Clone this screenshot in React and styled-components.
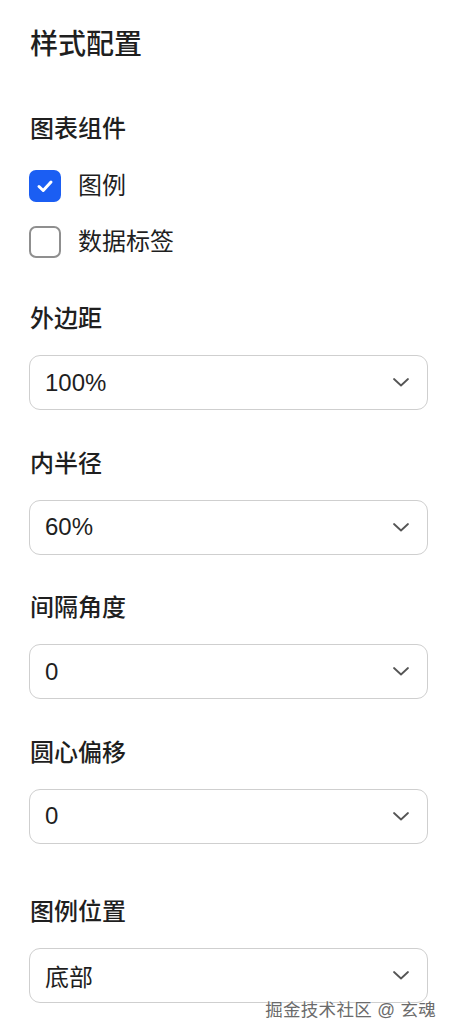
import React from 'react'
import styled, { createGlobalStyle } from 'styled-components'

const GlobalStyle = createGlobalStyle`
  html, body {
    margin: 0;
    padding: 0;
    background: #ffffff;
  }
  body {
    font-family: "Liberation Sans", "Noto Sans CJK SC", sans-serif;
    color: #1f1f1f;
  }
`

const Page = styled.div`
  position: relative;
  width: 452px;
  height: 1036px;
  box-sizing: border-box;
  padding: 25px 24px 0 29px;
  display: flex;
  flex-direction: column;
  overflow: hidden;
`

const Title = styled.h2`
  margin: 0;
  font-size: 28px;
  line-height: 40px;
  font-weight: 500;
  padding-left: 1px;
`

const GroupLabel = styled.div`
  font-size: 24px;
  line-height: 36px;
  font-weight: 500;
  padding-left: 1px;
  margin-top: ${(p) => p.marginTop || '0'};
`

const CheckList = styled.div`
  display: flex;
  flex-direction: column;
  gap: 24px;
  margin-top: 23px;
`

const CheckRow = styled.label`
  display: flex;
  align-items: center;
  gap: 17px;
  font-size: 24px;
  line-height: 32px;
`

const Box = styled.span`
  width: 32px;
  height: 32px;
  box-sizing: border-box;
  border-radius: 7px;
  display: flex;
  align-items: center;
  justify-content: center;
  flex-shrink: 0;
  background: ${(p) => (p.checked ? '#1b5ef3' : '#ffffff')};
  border: ${(p) => (p.checked ? 'none' : '2px solid #8f8f8f')};
`

const Field = styled.div`
  display: flex;
  flex-direction: column;
  margin-top: ${(p) => p.marginTop || '35.5px'};
`

const SelectBox = styled.div`
  margin-top: 18px;
  height: 55px;
  box-sizing: border-box;
  border: 1.5px solid #cfcfcf;
  border-radius: 11px;
  display: flex;
  align-items: center;
  justify-content: space-between;
  padding: 0 17px 0 15px;
  font-size: 24px;
  color: #1f1f1f;
`

const Watermark = styled.div`
  position: absolute;
  right: 16px;
  bottom: 16px;
  font-size: 17.5px;
  line-height: 20px;
  color: #6b6b6b;
  text-shadow: 0 0 2px #fff, 0 0 1px #fff;
  letter-spacing: 0.3px;
`

const Check = () => (
  <svg width="20" height="20" viewBox="0 0 20 20" fill="none">
    <path d="M4 10.5 L8.2 14.5 L16 6" stroke="#fff" strokeWidth="3" strokeLinecap="round" strokeLinejoin="round" />
  </svg>
)

const Chevron = () => (
  <svg width="18" height="11" viewBox="0 0 18 11" fill="none">
    <path d="M2 2 L9 8.5 L16 2" stroke="#555" strokeWidth="1.8" strokeLinecap="round" strokeLinejoin="round" />
  </svg>
)

const Checkbox = ({ checked, label }) => (
  <CheckRow>
    <Box checked={checked}>{checked && <Check />}</Box>
    <span>{label}</span>
  </CheckRow>
)

const Select = ({ label, value, marginTop }) => (
  <Field marginTop={marginTop}>
    <GroupLabel>{label}</GroupLabel>
    <SelectBox>
      <span>{value}</span>
      <Chevron />
    </SelectBox>
  </Field>
)

const fields = [
  { label: '外边距', value: '100%', marginTop: '43px' },
  { label: '内半径', value: '60%' },
  { label: '间隔角度', value: '0' },
  { label: '圆心偏移', value: '0' },
  { label: '图例位置', value: '底部', marginTop: '50px' },
]

const App = () => (
  <Page>
    <GlobalStyle />
    <Title>样式配置</Title>
    <GroupLabel marginTop="46px">图表组件</GroupLabel>
    <CheckList>
      <Checkbox checked label="图例" />
      <Checkbox label="数据标签" />
    </CheckList>
    {fields.map((f) => (
      <Select key={f.label} {...f} />
    ))}
    <Watermark>掘金技术社区 @ 玄魂</Watermark>
  </Page>
)

export default App
